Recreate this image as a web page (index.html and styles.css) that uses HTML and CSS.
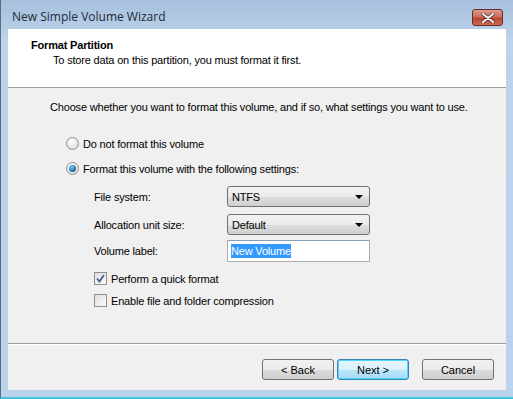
FILE: index.html
```html
<!DOCTYPE html>
<html lang="en">
<head>
  <meta charset="UTF-8">
  <title>New Simple Volume Wizard</title>
  <link rel="stylesheet" href="styles.css">
</head>
<body>

  <div class="window">
    <div class="title-bar">
      <span class="title">New Simple Volume Wizard</span>
      <button class="close-btn">
        <svg width="14" height="10" viewBox="0 0 14 10">
          <path d="M2 1 L12 9 M12 1 L2 9" stroke="#5a2a2a" stroke-width="3.6" stroke-linecap="round"/>
          <path d="M2 1 L12 9 M12 1 L2 9" stroke="#f4f4f4" stroke-width="2.2" stroke-linecap="round"/>
        </svg>
      </button>
    </div>

    <div class="client">
      <div class="header">
        <h1>Format Partition</h1>
        <p>To store data on this partition, you must format it first.</p>
      </div>

      <div class="content">
        <p class="intro">Choose whether you want to format this volume, and if so, what settings you want to use.</p>

        <label class="option">
          <span class="radio"></span>
          Do not format this volume
        </label>
        <label class="option">
          <span class="radio checked"></span>
          Format this volume with the following settings:
        </label>

        <div class="settings">
          <div class="field">
            <span class="field-label">File system:</span>
            <div class="select">NTFS<span class="arrow"></span></div>
          </div>
          <div class="field tight">
            <span class="field-label">Allocation unit size:</span>
            <div class="select">Default<span class="arrow"></span></div>
          </div>
          <div class="field last">
            <span class="field-label">Volume label:</span>
            <div class="textbox"><span class="selected">New Volume</span></div>
          </div>

          <label class="check-row first">
            <span class="checkbox checked">
              <svg width="9" height="9" viewBox="0 0 9 9">
                <path d="M1 4.5 L3.5 7.5 L8 1" fill="none" stroke="#4a5f97" stroke-width="1.8"/>
              </svg>
            </span>
            Perform a quick format
          </label>
          <label class="check-row">
            <span class="checkbox"></span>
            Enable file and folder compression
          </label>
        </div>
      </div>

      <div class="footer">
        <button class="btn">&lt; Back</button>
        <button class="btn default">Next &gt;</button>
        <button class="btn cancel">Cancel</button>
      </div>
    </div>
  </div>

</body>
</html>
```

FILE: styles.css
```css
body {
  margin: 0;
  font-family: "Liberation Sans", Arial, sans-serif;
  font-size: 11px;
  letter-spacing: -0.18px;
  color: #000;
  background: #fff;
}

.window {
  width: 513px;
  height: 399px;
  box-sizing: border-box;
  border-left: 1px solid #5d6d80;
  border-bottom: 2px solid #3ec3dc;
  background: linear-gradient(to bottom, #a7c0dc 0px, #bcd3ea 40px, #bad2ea 100%);
  display: flex;
  flex-direction: column;
}

.title-bar {
  height: 29px;
  display: flex;
  align-items: flex-start;
  justify-content: space-between;
  padding-left: 11px;
  padding-right: 10px;
}

.title {
  font-family: "Open Sans", "Liberation Sans", sans-serif;
  font-size: 12px;
  letter-spacing: 0;
  color: #1e2b3a;
  margin-top: 8px;
}

.close-btn {
  margin-top: 9px;
  width: 31px;
  height: 17px;
  padding: 0;
  border: 1px solid #6b2a2a;
  border-radius: 3px;
  background: linear-gradient(to bottom, #dc9a8c 0%, #cd6f5e 45%, #b9452f 55%, #cf6a52 100%);
  display: flex;
  align-items: center;
  justify-content: center;
}

.client {
  margin: 0 7px 0 7px;
  height: 361px;
  background: #f0f0f0;
  display: flex;
  flex-direction: column;
}

.header {
  background: #fff;
  height: 59px;
  box-sizing: border-box;
  border-bottom: 1px solid #a0a0a0;
  padding: 10px 0 0 23px;
}

.header h1 {
  font-size: 11px;
  font-weight: bold;
  margin: 0;
}

.header p {
  margin: 3px 0 0 22px;
}

.content {
  flex: 1;
  padding: 13px 0 0 42px;
  border-bottom: 1px solid #a0a0a0;
}

.intro {
  margin: 0 0 24px 0;
}

.option {
  display: flex;
  align-items: center;
  height: 13px;
  margin: 0 0 12px 16px;
}

.radio {
  width: 11px;
  height: 11px;
  border: 1px solid #8e8f8f;
  border-radius: 50%;
  background: radial-gradient(circle at 40% 35%, #fff 0%, #e6e6e6 60%, #cfcfcf 100%);
  margin-right: 4px;
  position: relative;
}

.radio.checked::after {
  content: "";
  position: absolute;
  left: 2px;
  top: 2px;
  width: 7px;
  height: 7px;
  border-radius: 50%;
  background: radial-gradient(circle at 40% 35%, #7fd0f7 0%, #1e6fb4 60%, #0d3f6f 100%);
}

.settings {
  padding-left: 44px;
  margin-top: -1px;
}

.field {
  display: flex;
  align-items: center;
  margin-bottom: 7px;
}

.field.tight {
  margin-bottom: 5px;
}

.field.last {
  margin-bottom: 0;
}

.field-label {
  width: 133px;
}

.select,
.textbox {
  width: 143px;
  box-sizing: border-box;
  height: 21px;
  display: flex;
  align-items: center;
  font-size: 11px;
}

.select {
  border: 1px solid #707070;
  border-radius: 3px;
  background: linear-gradient(to bottom, #f2f2f2 0%, #ebebeb 50%, #dddddd 51%, #cfcfcf 100%);
  padding-left: 4px;
  justify-content: space-between;
  padding-right: 6px;
}

.arrow {
  width: 0;
  height: 0;
  border-left: 4px solid transparent;
  border-right: 4px solid transparent;
  border-top: 4px solid #000;
}

.textbox {
  height: 22px;
  border: 1px solid #abadb3;
  border-top-color: #8b9cb5;
  background: #fff;
  padding-left: 3px;
}

.selected {
  background: #3399ff;
  color: #fff;
  line-height: 14px;
}

.check-row {
  display: flex;
  align-items: center;
  height: 13px;
  margin-bottom: 9px;
}

.check-row.first {
  margin-top: 10px;
}

.checkbox {
  width: 11px;
  height: 11px;
  border: 1px solid #8e8f8f;
  background: linear-gradient(to bottom right, #e0e0e0, #f8f8f8);
  margin-right: 4px;
  display: flex;
  align-items: center;
  justify-content: center;
}

.footer {
  height: 46px;
  box-sizing: border-box;
  border-top: 1px solid #fff;
  display: flex;
  align-items: flex-start;
  padding: 14px 0 0 254px;
}

.btn {
  width: 72px;
  height: 21px;
  box-sizing: border-box;
  font-family: "Liberation Sans", Arial, sans-serif;
  font-size: 11px;
  color: #000;
  border: 1px solid #707070;
  border-radius: 3px;
  background: linear-gradient(to bottom, #f2f2f2 0%, #ebebeb 50%, #dddddd 51%, #cfcfcf 100%);
  padding: 0;
}

.btn.default {
  margin-left: 3px;
  border-color: #3c7fb1;
  box-shadow: inset 0 0 0 1px #48d8fd;
  background: linear-gradient(to bottom, #eaf6fd 0%, #d9f0fc 50%, #bee6fd 51%, #a7d9f5 100%);
}

.btn.cancel {
  margin-left: 13px;
}
```
